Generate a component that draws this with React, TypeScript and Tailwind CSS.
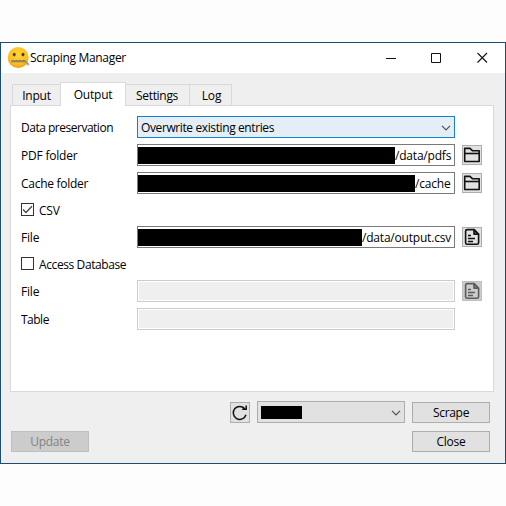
import React from "react";

const text = "whitespace-nowrap leading-4";

function FolderIcon() {
  return (
    <svg className="shrink-0" width="18" height="18" viewBox="0 0 18 18" fill="none" stroke="#111" strokeWidth="1.6" strokeLinejoin="round">
      <path d="M1.7 15.5V2.4H7L9.6 4.8H16.2V15.5Z" />
      <path d="M1.7 7.5H16.2" />
    </svg>
  );
}

function FileIcon({ color }: { color: string }) {
  return (
    <svg className="shrink-0" width="18" height="18" viewBox="0 0 18 18" fill="none" stroke={color} strokeWidth="1.6" strokeLinejoin="round">
      <path d="M11 1.6H4.2Q2.6 1.6 2.6 3.2V14.7Q2.6 16.3 4.2 16.3H14Q15.6 16.3 15.6 14.7V6.2Z" />
      <path d="M11 1.6V6.2H15.6Z" fill={color} fillOpacity=".55" />
      <path d="M5 7.5H8M5 10.5H12M5 13.5H10" />
    </svg>
  );
}

function Chevron() {
  return (
    <svg className="mt-px" width="10" height="6" viewBox="0 0 10 6" fill="none" stroke="#505050" strokeWidth="1.2">
      <path d="M1 .8L5 4.8L9 .8" />
    </svg>
  );
}

function IconButton({ children, disabled }: { children: React.ReactNode; disabled?: boolean }) {
  return (
    <button
      className={`ml-[7px] flex size-5 shrink-0 items-center justify-center border ${
        disabled ? "border-[#bfbfbf] bg-[#cccccc]" : "border-[#adadad] bg-[#e1e1e1]"
      }`}
    >
      {children}
    </button>
  );
}

function Row({ label, spacing = "", children }: { label: string; spacing?: string; children: React.ReactNode }) {
  return (
    <div className="flex h-[22px] items-center">
      <span className={`w-[116px] shrink-0 pt-0.5 ${text} ${spacing}`}>{label}</span>
      {children}
    </div>
  );
}

function PathField({ mask, value }: { mask: string; value: string }) {
  return (
    <div className="flex h-[22px] w-[318px] shrink-0 items-center border border-[#7a7a7a] bg-white">
      <div className={`mt-px h-[17px] shrink-0 bg-black ${mask}`} />
      <span className={`pt-0.5 ${text}`}>{value}</span>
    </div>
  );
}

function EmptyField() {
  return (
    <div className="h-[22px] w-[318px] shrink-0 border border-[#cccccc] bg-white p-px">
      <div className="h-full bg-[#efefef]" />
    </div>
  );
}

function CheckRow({ label, checked, spacing = "" }: { label: string; checked?: boolean; spacing?: string }) {
  return (
    <div className="flex h-[13px] items-center">
      <span className="flex size-[13px] items-center justify-center border border-[#333] bg-white">
        {checked && (
          <svg width="11" height="11" viewBox="0 0 11 11" fill="none" stroke="#444" strokeWidth="1.3">
            <path d="M1 5.5L4 8.5L10 2.3" />
          </svg>
        )}
      </span>
      <span className={`ml-[5px] pt-[3px] ${text} ${spacing}`}>{label}</span>
    </div>
  );
}

function ZipperFace() {
  return (
    <svg width="23" height="22" viewBox="0 0 23 22">
      <defs>
        <radialGradient id="face" cx=".5" cy=".35" r=".65">
          <stop offset="0" stopColor="#ffd43b" />
          <stop offset=".7" stopColor="#fcc021" />
          <stop offset="1" stopColor="#eca012" />
        </radialGradient>
      </defs>
      <circle cx="11.2" cy="10.5" r="10.5" fill="url(#face)" />
      <ellipse cx="7.2" cy="7.6" rx="1.5" ry="1.8" fill="#5a3a16" />
      <ellipse cx="16" cy="7.6" rx="1.5" ry="1.8" fill="#5a3a16" />
      <path d="M4.3 14.2H18.5" stroke="#76602e" strokeWidth="2" />
      <path d="M4.3 13.2L6 15.3L7.7 13.2L9.4 15.3L11.1 13.2L12.8 15.3L14.5 13.2L16.2 15.3L18.2 13.6" fill="none" stroke="#b3b4aa" strokeWidth=".8" />
      <path d="M18 13.9L20.9 17" stroke="#8b8b83" strokeWidth="1.2" />
      <circle cx="21" cy="17.2" r="1" fill="#d8d8d8" stroke="#8b8b83" strokeWidth=".7" />
    </svg>
  );
}

const button = "flex h-[21px] w-[78px] items-center justify-center border";

export default function App() {
  return (
    <div className="h-[506px] w-[506px] overflow-hidden bg-[#fdfdfd] pt-[42px] font-['Open_Sans','Noto_Sans',sans-serif] text-[12px] tracking-[-0.2px] text-black">
      <div className="flex h-[422px] flex-col border border-[#1b4d6e] bg-[#efefef]">
        <header className="flex h-[30px] shrink-0 items-center bg-white pl-[6px]">
          <ZipperFace />
          <span className={`${text} tracking-[-0.31px]`}>Scraping Manager</span>
          <svg className="mr-[15px] ml-auto" width="104" height="12" viewBox="0 0 104 12" fill="none" stroke="#111">
            <path d="M0 6.5H10M45.5 1.5H54.5V10.5H45.5Z" />
            <path d="M91.5 1L101 10.5M101 1L91.5 10.5" strokeWidth="1.1" />
          </svg>
        </header>

        <nav className="z-10 mt-[9px] ml-[11px] flex h-6 shrink-0 items-end">
          <div className="flex h-[22px] w-12 items-center justify-center border border-r-0 border-[#d9d9d9] pt-0.5">Input</div>
          <div className="flex h-6 w-[66px] items-center justify-center border border-b-0 border-[#d9d9d9] bg-white pt-px">Output</div>
          <div className="flex h-[22px] w-[63px] items-center justify-center border-y border-[#d9d9d9] pt-0.5 pr-px tracking-[-0.3px]">Settings</div>
          <div className="flex h-[22px] w-[43px] items-center justify-center border border-[#d9d9d9] pt-0.5 pl-0.5">Log</div>
        </nav>

        <main className="-mt-px ml-[9px] h-[287px] w-[484px] shrink-0 border border-[#d9d9d9] bg-white pt-[10px] pl-[10px]">
          <Row label="Data preservation" spacing="tracking-[-0.49px]">
            <div className="flex h-[22px] w-[318px] items-center justify-between border border-[#1a7fca] bg-[#e3eef7] pr-[3px] pl-[3px]">
              <span className={`pt-0.5 ${text} tracking-[-0.39px]`}>Overwrite existing entries</span>
              <Chevron />
            </div>
          </Row>
          <div className="mt-1.5">
            <Row label="PDF folder">
              <PathField mask="w-[257px]" value="/data/pdfs" />
              <IconButton><FolderIcon /></IconButton>
            </Row>
          </div>
          <div className="mt-1.5">
            <Row label="Cache folder" spacing="tracking-[-0.28px]">
              <PathField mask="w-[277px]" value="/cache" />
              <IconButton><FolderIcon /></IconButton>
            </Row>
          </div>
          <div className="mt-[9px]"><CheckRow label="CSV" checked /></div>
          <div className="mt-[10px]">
            <Row label="File">
              <PathField mask="w-[224px]" value="/data/output.csv" />
              <IconButton><FileIcon color="#111" /></IconButton>
            </Row>
          </div>
          <div className="mt-[9px]"><CheckRow label="Access Database" spacing="tracking-[-0.4px]" /></div>
          <div className="mt-[10px]">
            <Row label="File">
              <EmptyField />
              <IconButton disabled><FileIcon color="#5c5c5c" /></IconButton>
            </Row>
          </div>
          <div className="mt-1.5">
            <Row label="Table" spacing="tracking-[-0.5px]"><EmptyField /></Row>
          </div>
        </main>

        <footer className="mt-[9px] pr-[15px] pl-[10px]">
          <div className="flex items-end justify-end gap-[7px]">
            <button className="flex h-[21px] w-5 items-center justify-center border border-[#adadad] bg-[#e1e1e1]">
              <svg className="shrink-0" width="16" height="17" viewBox="0 0 16 17" fill="none" stroke="#111" strokeWidth="1.5">
                <path d="M13 5A6.5 6.5 0 1 0 14 10.8" />
                <path d="M14.2 1.5V5.2H10.2" />
              </svg>
            </button>
            <div className="flex h-[22px] w-[148px] items-center justify-between border border-[#adadad] bg-[#e1e1e1] pr-[3px] pl-[3px]">
              <div className="h-[13px] w-[41px] bg-black" />
              <Chevron />
            </div>
            <button className={`${button} border-[#adadad] bg-[#e1e1e1] pt-px tracking-[-0.3px]`}>Scrape</button>
          </div>
          <div className="mt-2 flex justify-between">
            <button className={`${button} border-[#bfbfbf] bg-[#cccccc] pt-px tracking-[-0.3px] text-[#838383]`}>Update</button>
            <button className={`${button} border-[#adadad] bg-[#e1e1e1] pt-px tracking-[-0.3px]`}>Close</button>
          </div>
        </footer>
      </div>
    </div>
  );
}
